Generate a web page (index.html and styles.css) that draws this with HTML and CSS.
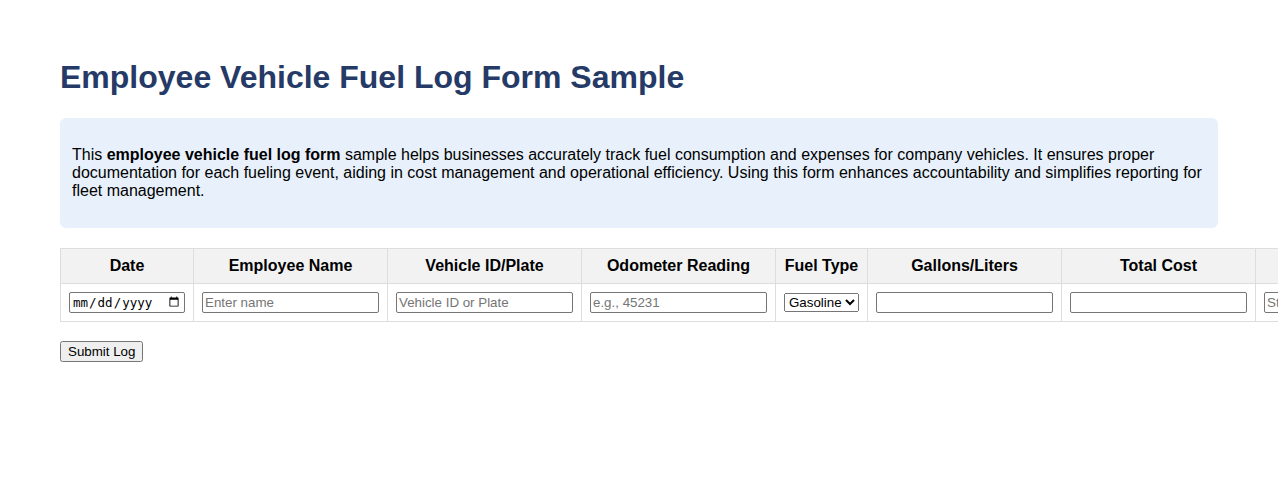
FILE: index.html
```html
<!DOCTYPE html>
<html lang="en">
<head>
<meta charset="utf-8">
<title>Employee Vehicle Fuel Log Form Sample</title>
<link rel="stylesheet" href="styles.css">
</head>
<body>
<h1 class="title">Employee Vehicle Fuel Log Form Sample</h1>
<div class="intro">
  <p>This <strong>employee vehicle fuel log form</strong> sample helps businesses accurately track fuel consumption and expenses for company vehicles. It ensures proper documentation for each fueling event, aiding in cost management and operational efficiency. Using this form enhances accountability and simplifies reporting for fleet management.</p>
</div>
<form class="log-form">
  <table class="log-table">
    <thead>
      <tr>
        <th>Date</th>
        <th>Employee Name</th>
        <th>Vehicle ID/Plate</th>
        <th>Odometer Reading</th>
        <th>Fuel Type</th>
        <th>Gallons/Liters</th>
        <th>Total Cost</th>
        <th>Station Name</th>
      </tr>
    </thead>
    <tbody>
      <tr>
        <td><input class="field date" type="date"></td>
        <td><input class="field" type="text" placeholder="Enter name"></td>
        <td><input class="field" type="text" placeholder="Vehicle ID or Plate"></td>
        <td><input class="field" type="text" placeholder="e.g., 45231"></td>
        <td><select class="select"><option>Gasoline</option><option>Diesel</option><option>Electric</option></select></td>
        <td><input class="field" type="text"></td>
        <td><input class="field" type="text"></td>
        <td><input class="field" type="text" placeholder="Station name"></td>
      </tr>
    </tbody>
  </table>
  <button class="submit" type="button">Submit Log</button>
</form>
</body>
</html>
```
FILE: styles.css
```css
html, body {
  overflow-x: hidden;
}
body {
  margin: 0;
  padding: 38px 60px;
  font-family: "Liberation Sans", Arial, sans-serif;
  font-size: 16px;
  color: #000;
  background: #fff;
}
.title {
  font-size: 32px;
  color: #253a66;
  margin: 21px 0 22px;
}
.intro {
  background: #e8f1fb;
  border-radius: 6px;
  padding: 12px;
}
.intro p {
  margin: 16px 0;
}
.log-form {
  margin-top: 20px;
}
.log-table {
  border-collapse: collapse;
}
.log-table th,
.log-table td {
  border: 1px solid #ddd;
  padding: 8px;
  text-align: center;
}
.log-table th {
  background: #f2f2f2;
  white-space: nowrap;
}
.field {
  box-sizing: border-box;
  width: 177px;
  height: 21px;
  font-family: "Liberation Sans", Arial, sans-serif;
  font-size: 13.33px;
  padding: 1px 2px;
  border: 1px solid #767676;
  border-radius: 2px;
  display: block;
}
.field.date {
  width: 116px;
  font-family: "DejaVu Sans Mono", monospace;
  font-size: 12.5px;
}
.select {
  box-sizing: border-box;
  width: 75px;
  height: 19px;
  font-family: "Liberation Sans", Arial, sans-serif;
  font-size: 13.33px;
  display: block;
}
.submit {
  margin-top: 19px;
  font-family: "Liberation Sans", Arial, sans-serif;
  font-size: 13.33px;
  padding: 1px 6px;
  height: 21px;
}
```
